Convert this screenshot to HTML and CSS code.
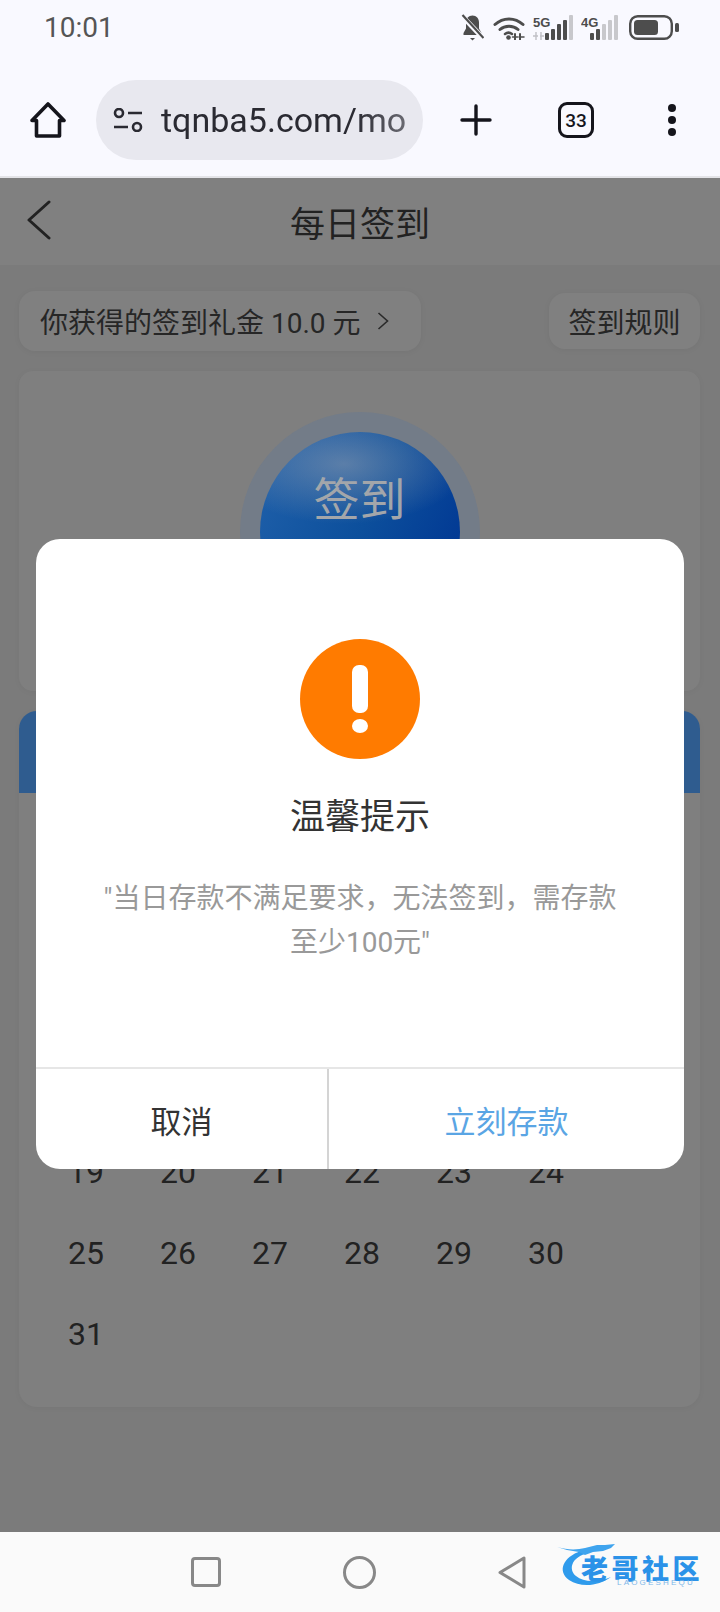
FILE: index.html
```html
<!DOCTYPE html>
<html lang="zh-CN">
<head>
    <meta charset="utf-8">
    <title>每日签到</title>
    <link rel="stylesheet" href="styles.css">
</head>
<body>
<div class="phone">
    <!-- Browser chrome -->
    <header class="chrome">
        <div class="status">
            <span class="time">10:01</span>
            <div class="status-icons">
                <svg class="ic-bell" width="23" height="27" viewBox="0 0 23 27">
                    <path d="M11.5 1.5c-4 0-6.5 3-6.5 7v6L2.5 19v2h18v-2L18 14.500v-6c0-4-2.500-7-6.500-7z" fill="#4d4d4d"/>
                    <path d="M9 24h5l-2.500 2.500z" fill="#4d4d4d"/>
                    <path d="M1 2l21 22" stroke="#f9f9ff" stroke-width="5"/>
                    <path d="M1.500 1l21 23" stroke="#4d4d4d" stroke-width="2.200"/>
                </svg>
                <svg class="ic-wifi" width="32" height="25" viewBox="0 0 32 25" fill="none" stroke="#4d4d4d" stroke-width="3" stroke-linecap="round">
                    <path d="M2 9.500c8-7.500 20-7.500 28 0"/>
                    <path d="M7 14.500c5-4.500 13-4.500 18 0"/>
                    <path d="M12 19c2-1.600 5-1.600 7 0" stroke-width="2.500"/>
                    <circle cx="15.500" cy="22.500" r="2.300" fill="#4d4d4d" stroke="none"/>
                    <path d="M22 19v6M27 19v6" stroke-width="2"/>
                    <path d="M19.500 22h5M26 22h5" stroke-width="1.500"/>
                </svg>
                <svg class="ic-net" width="40" height="25" viewBox="0 0 40 25">
                    <text x="0" y="12" class="net-label">5G</text>
                    <path d="M3 17v8M8 17v8M0 21h5M7 21h4" stroke="#c0c0c6" stroke-width="1.400"/>
                    <rect x="12" y="18" width="4" height="7" rx="1" fill="#4d4d4d"/>
                    <rect x="18" y="14" width="4" height="11" rx="1" fill="#4d4d4d"/>
                    <rect x="24" y="9" width="4" height="16" rx="1" fill="#4d4d4d"/>
                    <rect x="30" y="5" width="4" height="20" rx="1" fill="#4d4d4d"/>
                    <rect x="36" y="0" width="4" height="25" rx="1" fill="#c8c8cc"/>
                </svg>
                <svg class="ic-net" width="37" height="25" viewBox="0 0 37 25">
                    <text x="0" y="12" class="net-label">4G</text>
                    <rect x="9" y="18" width="4" height="7" rx="1" fill="#4d4d4d"/>
                    <rect x="15" y="14" width="4" height="11" rx="1" fill="#4d4d4d"/>
                    <rect x="21" y="9" width="4" height="16" rx="1" fill="#c8c8cc"/>
                    <rect x="27" y="5" width="4" height="20" rx="1" fill="#c8c8cc"/>
                    <rect x="33" y="0" width="4" height="25" rx="1" fill="#c8c8cc"/>
                </svg>
                <svg class="ic-batt" width="50" height="25" viewBox="0 0 50 25">
                    <rect x="1.200" y="1.200" width="41.600" height="22.600" rx="7.500" fill="none" stroke="#4d4d4d" stroke-width="2.400"/>
                    <rect x="5" y="5" width="24" height="15" rx="3.500" fill="#4d4d4d"/>
                    <rect x="46" y="8" width="4" height="9" rx="1.500" fill="#4d4d4d"/>
                </svg>
            </div>
        </div>
        <div class="toolbar">
            <svg class="ic-home" width="36" height="36" viewBox="0 0 36 36" fill="none" stroke="#15151c" stroke-width="3.600" stroke-linejoin="round" stroke-linecap="round">
                <path d="M2 18.500L18 2l16 16.500h-4.500V34h-23V18.500z"/>
            </svg>
            <div class="url-pill">
                <svg width="30" height="24" viewBox="0 0 30 24" fill="none" stroke="#2a2a32" stroke-width="2.600">
                    <circle cx="6" cy="5" r="4"/>
                    <path d="M15 5h14M1 19h14"/>
                    <circle cx="24" cy="19" r="4"/>
                </svg>
                <span class="url-text">tqnba5.com/mobile</span>
            </div>
            <svg class="ic-plus" width="32" height="32" viewBox="0 0 32 32" stroke="#15151c" stroke-width="3.400" stroke-linecap="round">
                <path d="M16 2v28M2 16h28"/>
            </svg>
            <div class="tabs-count">33</div>
            <svg class="ic-more" width="8" height="32" viewBox="0 0 8 32" fill="#15151c">
                <circle cx="4" cy="4" r="4"/>
                <circle cx="4" cy="16" r="4"/>
                <circle cx="4" cy="28" r="4"/>
            </svg>
        </div>
    </header>

    <!-- Sign-in page, dimmed behind the dialog -->
    <main class="page">
        <div class="nav">
            <svg class="back" width="24" height="40" viewBox="0 0 24 40" fill="none" stroke="#222" stroke-width="3" stroke-linecap="round" stroke-linejoin="round">
                <path d="M22 2L2 20l20 18"/>
            </svg>
            <h1 class="nav-title">每日签到</h1>
        </div>

        <div class="chips">
            <div class="chip chip-gift">
                <span>你获得的签到礼金 10.0 元</span>
                <svg width="12" height="18" viewBox="0 0 12 18" fill="none" stroke="#2a2a2a" stroke-width="1.600">
                    <path d="M1.500 1l9 8-9 8"/>
                </svg>
            </div>
            <div class="chip chip-rules">签到规则</div>
        </div>

        <section class="card sign-card">
            <div class="halo">
                <div class="sign-btn">签到</div>
            </div>
        </section>

        <section class="card calendar">
            <div class="cal-band"></div>
            <div class="cal-days">
                <span>1</span><span>2</span><span>3</span><span>4</span><span>5</span><span>6</span>
                <span>7</span><span>8</span><span>9</span><span>10</span><span>11</span><span>12</span>
                <span>13</span><span>14</span><span>15</span><span>16</span><span>17</span><span>18</span>
                <span>19</span><span>20</span><span>21</span><span>22</span><span>23</span><span>24</span>
                <span>25</span><span>26</span><span>27</span><span>28</span><span>29</span><span>30</span>
                <span>31</span>
            </div>
        </section>

        <div class="dialog">
            <div class="dialog-body">
                <svg class="warn" width="120" height="120" viewBox="0 0 120 120">
                    <circle cx="60" cy="60" r="60" fill="#ff7b00"/>
                    <rect x="52" y="26" width="16" height="48" rx="7" fill="#fff"/>
                    <ellipse cx="60" cy="87" rx="8" ry="7" fill="#fff"/>
                </svg>
                <h2 class="dialog-title">温馨提示</h2>
                <p class="dialog-msg">"当日存款不满足要求，无法签到，需存款至少100元"</p>
            </div>
            <div class="dialog-foot">
                <div class="btn btn-cancel">取消</div>
                <div class="btn btn-ok">立刻存款</div>
            </div>
        </div>
    </main>

    <!-- Android nav bar -->
    <footer class="sysnav">
        <svg width="30" height="30" viewBox="0 0 30 30" fill="none" stroke="#888" stroke-width="3">
            <rect x="1.500" y="1.500" width="27" height="27" rx="2.500"/>
        </svg>
        <svg width="33" height="33" viewBox="0 0 33 33" fill="none" stroke="#888" stroke-width="3">
            <circle cx="16.500" cy="16.500" r="15"/>
        </svg>
        <svg width="28" height="33" viewBox="0 0 28 33" fill="none" stroke="#888" stroke-width="3" stroke-linejoin="round">
            <path d="M2 16.500L26 2v29z"/>
        </svg>
        <div class="logo">
            <svg class="logo-mark" width="90" height="46" viewBox="0 0 90 46">
                <path d="M26 8C8 14 2 28 14 37c12 8 30 6 42-3-12 5-27 6-35-1C13 26 17 15 30 11z" fill="#2f9bec"/>
                <path d="M2 4c10 3 20 3 28 1l12-3 8 0 10-1-4 4-8 3-10 1-8 3-6-3-12-2z" fill="#3fa4ee"/>
            </svg>
            <span class="logo-name">老哥社区</span>
            <span class="logo-sub">LAOGESHEQU</span>
        </div>
    </footer>
</div>
</body>
</html>
```
FILE: styles.css
```css
/* General styling */
* {
    box-sizing: border-box;
}

body {
    margin: 0;
    font-family: Roboto, "Noto Sans CJK SC", sans-serif;
    background-color: #7b7b7b;
}

h1, h2, p {
    margin: 0;
    font-weight: 400;
}

.phone {
    position: relative;
    display: flex;
    flex-direction: column;
    width: 720px;
    height: 1612px;
    overflow: hidden;
}

/* Browser chrome */
.chrome {
    flex: none;
    height: 178px;
    background-color: #f9f9ff;
    border-bottom: 2px solid #e4e4e8;
}

.status {
    display: flex;
    justify-content: space-between;
    align-items: center;
    height: 54px;
    padding: 0 41px 0 44px;
}

.time {
    font-size: 28px;
    color: #555;
}

.status-icons {
    display: flex;
    align-items: center;
}

.status-icons svg {
    display: block;
}

.ic-wifi {
    margin-left: 9px;
}

.ic-net {
    margin-left: 8px;
}

.ic-batt {
    margin-left: 11px;
}

.net-label {
    font-family: "Liberation Sans", sans-serif;
    font-size: 13px;
    font-weight: 700;
    fill: #4d4d4d;
}

.toolbar {
    display: flex;
    align-items: center;
    height: 80px;
    margin-top: 26px;
    padding-left: 30px;
}

.url-pill {
    display: flex;
    align-items: center;
    width: 327px;
    height: 80px;
    margin-left: 30px;
    padding: 0 15px 0 17px;
    border-radius: 40px;
    background-color: #e8e8ef;
}

.url-text {
    flex: 1;
    margin-left: 18px;
    overflow: hidden;
    font-size: 34px;
    color: #2a2a32;
    white-space: nowrap;
    -webkit-mask-image: linear-gradient(to right, #000 78%, rgba(0, 0, 0, 0.65) 100%);
    mask-image: linear-gradient(to right, #000 78%, rgba(0, 0, 0, 0.65) 100%);
}

.ic-plus {
    margin-left: 37px;
}

.tabs-count {
    display: flex;
    justify-content: center;
    align-items: center;
    width: 36px;
    height: 36px;
    margin-left: 66px;
    border: 3.5px solid #15151c;
    border-radius: 9px;
    font-size: 19px;
    font-weight: 500;
    color: #15151c;
}

.ic-more {
    margin-left: 74px;
}

/* Dimmed sign-in page */
.page {
    position: relative;
    flex: 1;
    padding-bottom: 20px;
    background-color: #7b7b7b;
}

.nav {
    display: flex;
    justify-content: center;
    align-items: center;
    position: relative;
    height: 87px;
    background-color: #808080;
}

.back {
    position: absolute;
    left: 27px;
    top: 22px;
}

.nav-title {
    font-size: 35px;
    color: #222;
}

.chips {
    display: flex;
    justify-content: space-between;
    align-items: center;
    height: 60px;
    margin: 26px 20px 20px 19px;
}

.chip {
    display: flex;
    align-items: center;
    border-radius: 16px;
    background-color: #808080;
    box-shadow: 0 1px 6px rgba(0, 0, 0, 0.05);
    font-size: 28px;
    color: #262626;
}

.chip-gift {
    width: 402px;
    height: 60px;
    padding-left: 21px;
}

.chip-gift svg {
    margin-left: 17px;
}

.chip-rules {
    justify-content: center;
    width: 151px;
    height: 56px;
}

.card {
    margin: 0 20px 20px 19px;
    border-radius: 14px;
    background-color: #7f7f7f;
    box-shadow: 0 1px 6px rgba(0, 0, 0, 0.04);
}

.sign-card {
    display: flex;
    justify-content: center;
    height: 320px;
    padding-top: 41px;
}

.halo {
    display: flex;
    justify-content: center;
    align-items: center;
    width: 240px;
    height: 240px;
    border-radius: 50%;
    background-color: #737c88;
}

.sign-btn {
    display: flex;
    justify-content: center;
    align-items: center;
    width: 200px;
    height: 200px;
    padding-bottom: 72px;
    border-radius: 50%;
    background:
        radial-gradient(ellipse 62% 30% at 42% 16%, rgba(150, 160, 175, 0.55), rgba(150, 160, 175, 0) 100%),
        linear-gradient(168deg, rgba(20, 110, 140, 0) 62%, rgba(20, 110, 140, 0.75) 66%, rgba(20, 110, 140, 0.5) 80%),
        linear-gradient(115deg, #1d5ea8 10%, #0c4f9c 50%, #023a94 85%);
    font-size: 46px;
    color: #a3a6aa;
}

.calendar {
    height: 696px;
    border-radius: 18px;
    overflow: hidden;
}

.cal-band {
    height: 82px;
    background-color: #2f5c8f;
}

.cal-days {
    display: grid;
    grid-template-columns: repeat(6, 92px);
    grid-auto-rows: 81px;
    align-items: center;
    padding: 95px 0 0 49px;
    font-size: 32px;
    color: #222;
}

/* Dialog */
.dialog {
    position: absolute;
    left: 36px;
    top: 361px;
    display: flex;
    flex-direction: column;
    width: 648px;
    height: 630px;
    border-radius: 24px;
    background-color: #fff;
    overflow: hidden;
}

.dialog-body {
    flex: 1;
    padding: 100px 60px 0;
    text-align: center;
}

.warn {
    display: block;
    margin: 0 auto;
}

.dialog-title {
    margin-top: 37px;
    font-size: 35px;
    line-height: 44px;
    color: #333;
}

.dialog-msg {
    margin-top: 37px;
    font-size: 28px;
    line-height: 44px;
    color: #999;
}

.dialog-foot {
    display: flex;
    flex: none;
    height: 102px;
    border-top: 2px solid #e6e6e6;
}

.btn {
    display: flex;
    justify-content: center;
    align-items: center;
    font-size: 31px;
}

.btn-cancel {
    width: 293px;
    border-right: 2px solid #d4d4d4;
    color: #333;
}

.btn-ok {
    flex: 1;
    color: #5aa5e4;
}

/* System nav bar */
.sysnav {
    position: relative;
    display: flex;
    flex: none;
    align-items: center;
    gap: 122px;
    height: 80px;
    padding-left: 191px;
    background-color: #fafafa;
}

.logo {
    position: absolute;
    left: 555px;
    top: 11px;
    width: 150px;
    height: 46px;
}

.logo-mark {
    position: absolute;
    left: 0;
    top: 0;
}

.logo-name {
    position: absolute;
    left: 26px;
    top: 11px;
    font-size: 27px;
    font-weight: 900;
    line-height: 32px;
    letter-spacing: 3.500px;
    white-space: nowrap;
    color: #2b92e8;
}

.logo-sub {
    position: absolute;
    left: 62px;
    top: 35px;
    font-family: "Liberation Sans", sans-serif;
    font-size: 8px;
    line-height: 9px;
    letter-spacing: 2.200px;
    color: #7fb8e8;
}
```
